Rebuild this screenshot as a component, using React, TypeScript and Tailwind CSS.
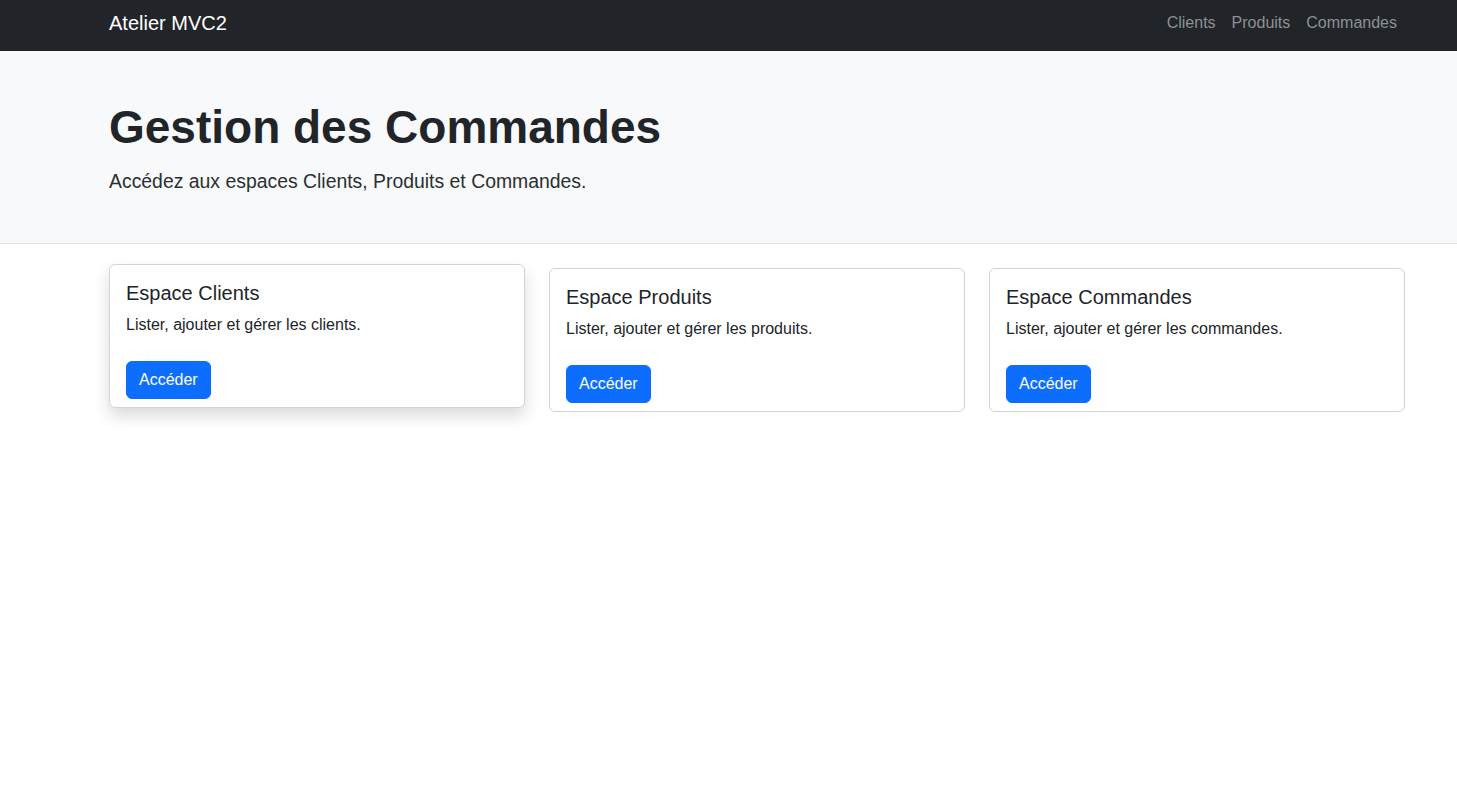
import React from "react";

const cards = [
  { title: "Espace Clients", text: "Lister, ajouter et gérer les clients.", hover: true },
  { title: "Espace Produits", text: "Lister, ajouter et gérer les produits.", hover: false },
  { title: "Espace Commandes", text: "Lister, ajouter et gérer les commandes.", hover: false },
];

export default function App() {
  return (
    <div className="min-h-[802px] bg-white text-[#212529] font-['Liberation_Sans',Arial,sans-serif]">
      <nav className="h-[51px] bg-[#212529] pt-[8px]">
        <div className="ml-[97px] w-[1320px] px-3 flex items-center justify-between h-[30px]">
          <a className="text-[20px] leading-[30px] text-white">Atelier MVC2</a>
          <ul className="flex items-center">
            {["Clients", "Produits", "Commandes"].map((l) => (
              <li key={l}>
                <a className="block px-2 text-[16px] leading-[24px] text-[#8e9093]">{l}</a>
              </li>
            ))}
          </ul>
        </div>
      </nav>

      <header className="h-[193px] bg-[#f8f9fa] border-b border-[#dee2e6] pt-[49px] box-border">
        <div className="ml-[97px] w-[1320px] px-3">
          <h1 className="text-[46px] leading-[1.2] font-bold mb-[12px] text-[#212529]">
            Gestion des Commandes
          </h1>
          <p className="text-[19.4px] leading-[1.5] text-[#2b2f33]">
            Accédez aux espaces Clients, Produits et Commandes.
          </p>
        </div>
      </header>

      <main className="ml-[97px] w-[1320px] px-3 mt-6">
        <div className="grid grid-cols-3 gap-6">
          {cards.map((c) => (
            <div
              key={c.title}
              className={
                c.hover
                  ? "bg-white border border-[#d3d4d5] rounded-[6px] px-4 pt-4 pb-2 -translate-y-1 shadow-[0_8px_16px_rgba(0,0,0,0.15)]"
                  : "bg-white border border-[#d3d4d5] rounded-[6px] px-4 pt-4 pb-2"
              }
            >
              <h5 className="text-[20px] leading-[24px] font-medium mb-2">{c.title}</h5>
              <p className="text-[16px] leading-[24px] mb-6">{c.text}</p>
              <a className="inline-block bg-[#0d6efd] border border-[#0d6efd] text-white text-[16px] leading-[24px] px-3 py-[6px] rounded-[6px]">
                Accéder
              </a>
            </div>
          ))}
        </div>
      </main>
    </div>
  );
}
